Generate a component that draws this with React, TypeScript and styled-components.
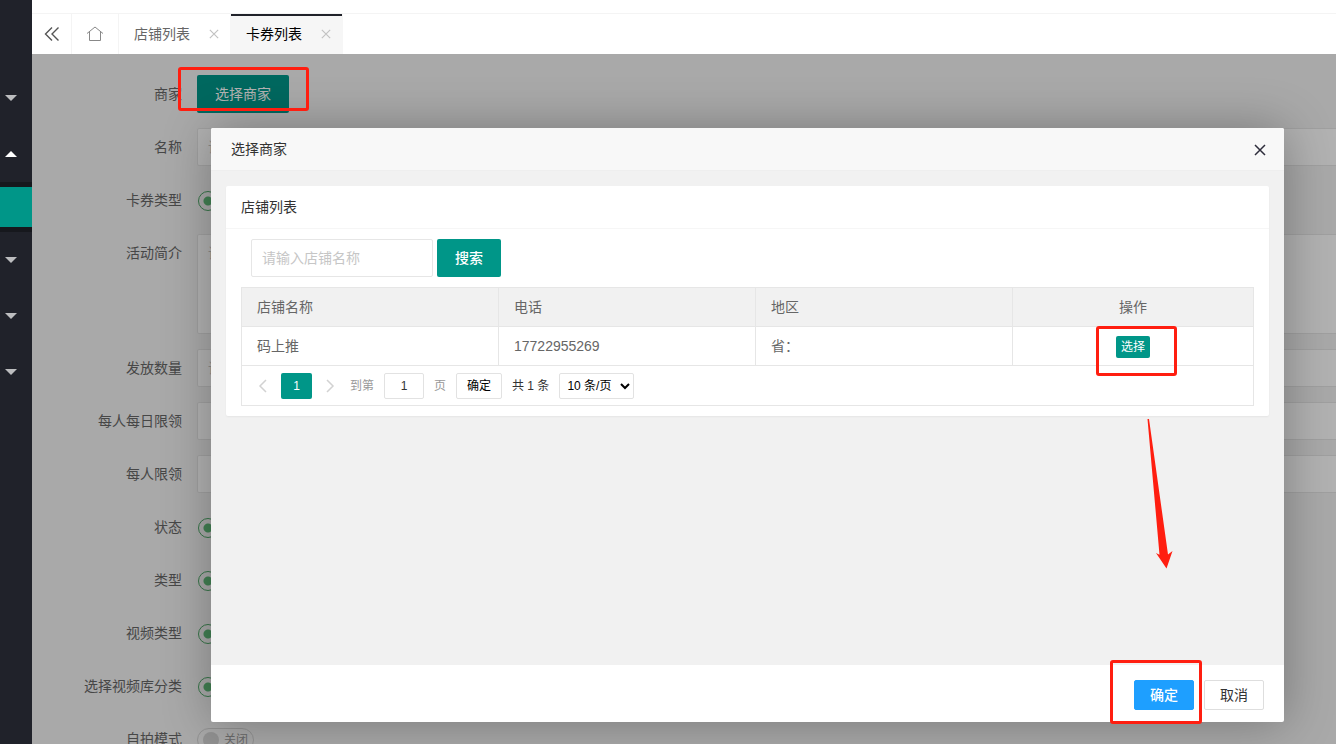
import React from 'react';
import styled, { createGlobalStyle, css } from 'styled-components';

const TEAL = '#009688';
const DARK = '#20222a';
const LINE = '#e6e6e6';
const MARK = '#ff1e10';

const GlobalStyle = createGlobalStyle`
  *, *::before, *::after { box-sizing: border-box; }
  body {
    margin: 0;
    color: #333;
    font: 14px/24px "Liberation Sans", "Noto Sans CJK SC", sans-serif;
  }
  button, input, select, textarea { font: inherit; color: inherit; margin: 0; }
  button { cursor: pointer; }
  a { color: inherit; text-decoration: none; }
`;

const Page = styled.div`
  display: flex;
  height: 100vh;
  overflow: hidden;
`;

const Sidebar = styled.nav`
  flex: 0 0 32px;
  padding-top: 70px;
  background: ${DARK};
`;

const MenuButton = styled.button`
  display: flex;
  align-items: center;
  width: 100%;
  height: 56px;
  padding: 0 5px;
  border: 0;
  background: none;
`;

const Caret = styled.span<{ $open?: boolean }>`
  border: 6px solid transparent;
  ${({ $open }) =>
    $open
      ? css`border-top-width: 0; border-bottom-color: #fff;`
      : css`border-bottom-width: 0; border-top-color: #bcbdbf;`}
`;

const SubMenu = styled.div`
  padding: 5px 0;
  background: #16181d;
`;

const SubMenuLink = styled.a`
  display: block;
  height: 40px;
  background: ${TEAL};
`;

const Main = styled.div`
  display: flex;
  flex: 1;
  flex-direction: column;
  min-width: 0;
`;

const TopStrip = styled.div`
  flex: 0 0 14px;
  border-bottom: 1px solid #f4f4f4;
  background: #fff;
`;

const TabBar = styled.div`
  display: flex;
  flex: 0 0 40px;
  background: #fff;
`;

const IconTab = styled.button<{ $width: number }>`
  display: flex;
  align-items: center;
  justify-content: center;
  width: ${({ $width }) => $width}px;
  padding: 0;
  border: 0;
  border-right: 1px solid #f4f4f4;
  background: none;
  color: #555;
`;

const Tab = styled.div<{ $active?: boolean }>`
  display: flex;
  align-items: center;
  gap: 19px;
  padding: 0 11px 0 15px;
  border-right: 1px solid #f6f6f6;
  color: ${({ $active }) => ($active ? '#000' : '#666')};
  ${({ $active }) => $active && css`background: #f6f6f6; box-shadow: inset 0 2px ${DARK};`}
`;

const TabClose = styled.button`
  display: flex;
  padding: 0;
  border: 0;
  background: none;
  color: #c2c2c2;
`;

const Content = styled.div`
  position: relative;
  flex: 1;
  min-height: 0;
`;

const FormArea = styled.div`
  height: 100%;
  overflow: hidden;
  background: #f2f2f2;
`;

const Form = styled.form`
  display: flex;
  flex-direction: column;
  gap: 15px;
  margin-right: -15px;
  padding-top: 21px;
`;

const FormRow = styled.div`
  display: flex;
  align-items: flex-start;
`;

const FieldLabel = styled.label`
  flex: 0 0 165px;
  padding: 7px 15px;
  color: #666;
  text-align: right;
`;

const Field = styled.div`
  display: flex;
  flex: 1;
  align-items: center;
  min-height: 38px;
`;

const fieldBox = css`
  border: 1px solid ${LINE};
  border-radius: 2px;
  background: #fff;
  outline: none;
  &::placeholder { color: #c6c6c6; opacity: 1; }
`;

const TextInput = styled.input`
  ${fieldBox}
  width: 100%;
  height: 38px;
  padding: 0 10px;
`;

const TextArea = styled.textarea`
  ${fieldBox}
  display: block;
  width: 100%;
  height: 100px;
  padding: 6px 10px;
  resize: none;
`;

const Radio = styled.input`
  && { margin: 2px 0 0 1px; }
  width: 20px;
  height: 20px;
  border: 1px solid #4fa868;
  border-radius: 50%;
  background: radial-gradient(circle, #5fb878 4px, transparent 5px);
  appearance: none;
`;

const Switch = styled.label`
  display: flex;
  align-items: center;
  gap: 5px;
  height: 24px;
  margin-top: 2px;
  padding: 0 5px;
  border: 1px solid #d2d2d2;
  border-radius: 20px;
  color: #999;
  font-size: 12px;
`;

const SwitchInput = styled.input`
  width: 16px;
  height: 16px;
  border-radius: 50%;
  background: #d2d2d2;
  appearance: none;
`;

const PrimaryButton = styled.button<{ $small?: boolean; $strong?: boolean }>`
  height: ${({ $small }) => ($small ? 22 : 38)}px;
  padding: 0 ${({ $small }) => ($small ? 5 : 18)}px;
  border: 0;
  border-radius: 2px;
  background: ${TEAL};
  color: #fff;
  font-size: ${({ $small }) => ($small ? 12 : 14)}px;
  font-weight: ${({ $strong }) => ($strong ? 500 : 400)};
  line-height: 22px;
  white-space: nowrap;
`;

const Mask = styled.div`
  position: absolute;
  inset: 0;
  background: rgba(0, 0, 0, 0.3);
`;

const Dialog = styled.section`
  position: absolute;
  top: 74px;
  right: 52px;
  bottom: 22px;
  left: 179px;
  display: flex;
  flex-direction: column;
  border-radius: 2px;
  background: #fff;
  box-shadow: 1px 1px 50px rgba(0, 0, 0, 0.3);
`;

const DialogHeader = styled.header`
  display: flex;
  align-items: center;
  justify-content: space-between;
  height: 43px;
  padding: 0 18px 0 20px;
  border-bottom: 1px solid #eee;
  border-radius: 2px 2px 0 0;
  background: #f8f8f8;
`;

const DialogTitle = styled.h2`
  margin: 0;
  font-size: 14px;
  font-weight: 400;
`;

const DialogClose = styled.button`
  display: flex;
  padding: 2px 0 0;
  border: 0;
  background: none;
  color: #2e2d3c;
`;

const DialogBody = styled.div`
  flex: 1;
  min-height: 0;
  padding: 15px;
  background: #f1f1f1;
`;

const DialogFooter = styled.footer`
  display: flex;
  justify-content: flex-end;
  gap: 10px;
  padding: 15px 20px 12px;
`;

const FooterButton = styled.button<{ $primary?: boolean }>`
  width: 60px;
  height: 30px;
  padding: 0;
  border: 1px solid ${({ $primary }) => ($primary ? '#1e9fff' : '#dedede')};
  border-radius: 2px;
  background: ${({ $primary }) => ($primary ? '#1e9fff' : '#fff')};
  color: ${({ $primary }) => ($primary ? '#fff' : '#333')};
  font-weight: ${({ $primary }) => ($primary ? 500 : 400)};
`;

const Card = styled.div`
  border-radius: 2px;
  background: #fff;
  box-shadow: 0 1px 2px rgba(0, 0, 0, 0.05);
`;

const CardTitle = styled.h3`
  margin: 0;
  padding: 9px 15px;
  border-bottom: 1px solid #f6f6f6;
  font-size: 14px;
  font-weight: 400;
`;

const CardBody = styled.div`
  padding: 10px 15px;
`;

const SearchBar = styled.form`
  display: flex;
  gap: 4px;
  padding: 0 10px 10px;
`;

const SearchField = styled.div`
  width: 182px;
`;

const TableFrame = styled.div`
  border: 1px solid ${LINE};
`;

const Table = styled.table`
  width: 100%;
  border-collapse: separate;
  border-spacing: 0;
  table-layout: fixed;
  color: #666;

  th, td {
    height: 39px;
    padding: 0 15px;
    border-right: 1px solid ${LINE};
    border-bottom: 1px solid ${LINE};
    font-weight: 400;
    text-align: left;
  }
  th { background: #f1f1f1; }
  th:last-child, td:last-child { border-right: 0; text-align: center; }
`;

const ShopColumn = styled.col`
  width: 257px;
`;

const Pager = styled.div`
  display: flex;
  align-items: center;
  gap: 10px;
  height: 39px;
  padding: 0 13px;
  color: #999;
  font-size: 12px;
`;

const PageArrow = styled.button`
  display: flex;
  align-items: center;
  justify-content: center;
  width: 14px;
  padding: 0;
  border: 0;
  background: none;
  color: #d2d2d2;
`;

const CurrentPage = styled.button`
  && { margin: 0 1px 0 2px; }
  width: 31px;
  height: 26px;
  padding: 0;
  border: 0;
  border-radius: 2px;
  background: ${TEAL};
  color: #fff;
`;

const JumpLabel = styled.label`
  display: flex;
  align-items: center;
  gap: 10px;
  margin-left: 3px;
`;

const JumpInput = styled.input`
  width: 40px;
  height: 26px;
  padding: 0;
  border: 1px solid #e2e2e2;
  border-radius: 2px;
  color: #333;
  text-align: center;
`;

const JumpButton = styled.button`
  width: 46px;
  height: 26px;
  padding: 0;
  border: 1px solid #e2e2e2;
  border-radius: 2px;
  background: #fff;
  color: #000;
`;

const Total = styled.span`
  color: #333;
`;

const PageSize = styled.select`
  width: 75px;
  height: 26px;
  padding: 0 0 0 3px;
  border: 1px solid #e2e2e2;
  border-radius: 2px;
  background: #fff;
  color: #000;
`;

const Anchor = styled.span`
  position: relative;
  display: inline-flex;
  vertical-align: middle;
`;

const Highlight = styled.span<{ $inset: string }>`
  position: absolute;
  inset: ${({ $inset }) => $inset};
  border: 3px solid ${MARK};
  border-radius: 3px;
  pointer-events: none;
`;

const StepHighlight = styled(Highlight)`
  width: 131px;
  height: 44px;
`;

const Arrow = styled.svg`
  position: absolute;
  top: 291px;
  right: 111px;
  pointer-events: none;
`;

const Cross = ({ size, width = 1 }: { size: number; width?: number }) => (
  <svg width={size} height={size} viewBox="0 0 12 12" fill="none" stroke="currentColor" strokeWidth={width}>
    <path d="M1 1 11 11M11 1 1 11" />
  </svg>
);

const RadioRow = ({ id, label }: { id: string; label: string }) => (
  <FormRow>
    <FieldLabel htmlFor={id}>{label}</FieldLabel>
    <Field><Radio type="radio" id={id} name={id} defaultChecked /></Field>
  </FormRow>
);

const InputRow = ({ id, label, placeholder }: { id: string; label: string; placeholder?: string }) => (
  <FormRow>
    <FieldLabel htmlFor={id}>{label}</FieldLabel>
    <Field><TextInput id={id} placeholder={placeholder} /></Field>
  </FormRow>
);

export default function App() {
  return (
    <Page>
      <GlobalStyle />
      <Sidebar>
        <MenuButton><Caret /></MenuButton>
        <MenuButton><Caret $open /></MenuButton>
        <SubMenu><SubMenuLink href="#" /></SubMenu>
        <MenuButton><Caret /></MenuButton>
        <MenuButton><Caret /></MenuButton>
        <MenuButton><Caret /></MenuButton>
      </Sidebar>

      <Main>
        <TopStrip />
        <TabBar>
          <IconTab $width={40}>
            <svg width="16" height="16" viewBox="0 0 16 16" fill="none" stroke="currentColor" strokeWidth="1.4">
              <path d="M8 1.500 1.500 8 8 14.500M14.500 1.500 8 8l6.500 6.500" />
            </svg>
          </IconTab>
          <IconTab $width={47}>
            <svg width="18" height="16" viewBox="0 0 18 16" fill="none" stroke="#888">
              <path d="M1 7.500 9 1l8 6.500M3.500 6v8.500h11V6" />
            </svg>
          </IconTab>
          <Tab>店铺列表<TabClose><Cross size={10} width={1.4} /></TabClose></Tab>
          <Tab $active>卡券列表<TabClose><Cross size={10} width={1.4} /></TabClose></Tab>
        </TabBar>

        <Content>
          <FormArea>
            <Form>
              <FormRow>
                <FieldLabel htmlFor="merchant">商家</FieldLabel>
                <Field><PrimaryButton type="button" id="merchant">选择商家</PrimaryButton></Field>
              </FormRow>
              <InputRow id="name" label="名称" placeholder="请输入名称" />
              <RadioRow id="cardType" label="卡券类型" />
              <FormRow>
                <FieldLabel htmlFor="intro">活动简介</FieldLabel>
                <Field><TextArea id="intro" placeholder="请输入活动简介" /></Field>
              </FormRow>
              <InputRow id="amount" label="发放数量" placeholder="请输入发放数量" />
              <InputRow id="dayLimit" label="每人每日限领" />
              <InputRow id="userLimit" label="每人限领" />
              <RadioRow id="status" label="状态" />
              <RadioRow id="type" label="类型" />
              <RadioRow id="videoType" label="视频类型" />
              <RadioRow id="videoClass" label="选择视频库分类" />
              <FormRow>
                <FieldLabel htmlFor="selfie">自拍模式</FieldLabel>
                <Field>
                  <Switch><SwitchInput type="checkbox" role="switch" id="selfie" />关闭</Switch>
                </Field>
              </FormRow>
            </Form>
          </FormArea>

          <Mask />

          <Dialog role="dialog" aria-labelledby="dialogTitle">
            <DialogHeader>
              <DialogTitle id="dialogTitle">选择商家</DialogTitle>
              <DialogClose><Cross size={12} width={1.5} /></DialogClose>
            </DialogHeader>
            <DialogBody>
              <Card>
                <CardTitle>店铺列表</CardTitle>
                <CardBody>
                  <SearchBar>
                    <SearchField>
                      <TextInput aria-label="店铺名称" placeholder="请输入店铺名称" />
                    </SearchField>
                    <PrimaryButton type="button" $strong>搜索</PrimaryButton>
                  </SearchBar>
                  <TableFrame>
                    <Table>
                      <colgroup><ShopColumn /><ShopColumn /><ShopColumn /><col /></colgroup>
                      <thead>
                        <tr><th>店铺名称</th><th>电话</th><th>地区</th><th>操作</th></tr>
                      </thead>
                      <tbody>
                        <tr>
                          <td>码上推</td>
                          <td>17722955269</td>
                          <td>省：</td>
                          <td>
                            <Anchor>
                              <PrimaryButton $small>选择</PrimaryButton>
                              <Highlight $inset="-10px -27px -18px -20px" />
                            </Anchor>
                          </td>
                        </tr>
                      </tbody>
                    </Table>
                    <Pager>
                      <PageArrow>
                        <svg width="9" height="14" viewBox="0 0 9 14" fill="none" stroke="currentColor" strokeWidth="1.500">
                          <path d="M8 1 2 7l6 6" />
                        </svg>
                      </PageArrow>
                      <CurrentPage>1</CurrentPage>
                      <PageArrow>
                        <svg width="9" height="14" viewBox="0 0 9 14" fill="none" stroke="currentColor" strokeWidth="1.500">
                          <path d="m1 1 6 6-6 6" />
                        </svg>
                      </PageArrow>
                      <JumpLabel>到第<JumpInput defaultValue="1" />页</JumpLabel>
                      <JumpButton>确定</JumpButton>
                      <Total>共 1 条</Total>
                      <PageSize aria-label="每页条数"><option>10 条/页</option></PageSize>
                    </Pager>
                  </TableFrame>
                </CardBody>
              </Card>
            </DialogBody>
            <DialogFooter>
              <Anchor>
                <FooterButton $primary>确定</FooterButton>
                <Highlight $inset="-20px -8px -14px -24px" />
              </Anchor>
              <FooterButton>取消</FooterButton>
            </DialogFooter>
            <Arrow width="26" height="150" viewBox="0 0 26 150" fill={MARK}>
              <path d="M.5 0h1.500L21 135.500l4.500-3.500L19.500 149.500 9 134l3.500 1.800Z" />
            </Arrow>
          </Dialog>

          <StepHighlight $inset="13px auto auto 146px" />
        </Content>
      </Main>
    </Page>
  );
}
